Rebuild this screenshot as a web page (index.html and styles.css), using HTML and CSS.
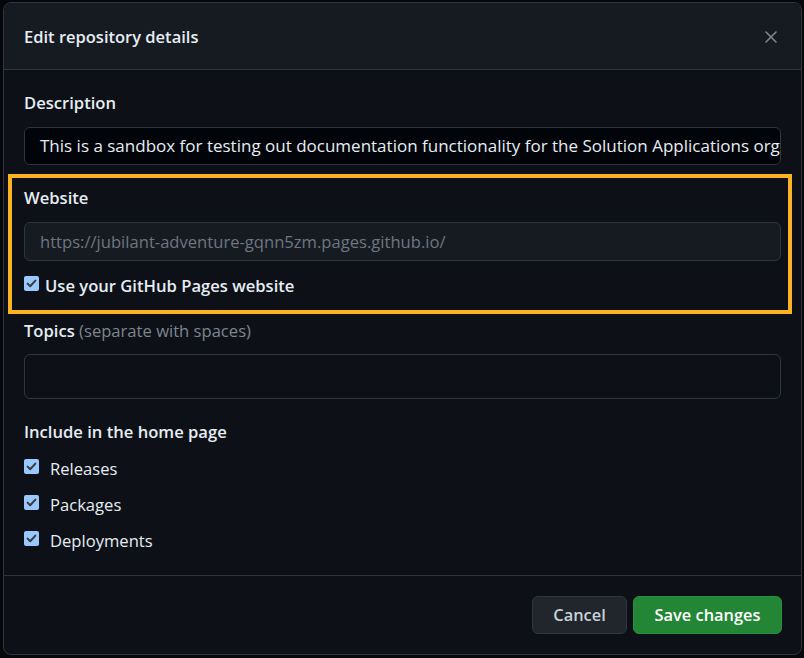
FILE: index.html
```html
<!DOCTYPE html>
<html lang="en">
<head>
<meta charset="utf-8">
<title>Edit repository details</title>
<link rel="stylesheet" href="styles.css">
</head>
<body>
<div class="dialog">
  <header class="dialog-header">
    <h1 class="dialog-title">Edit repository details</h1>
    <button class="close-btn" aria-label="Close">
      <svg width="16" height="16" viewBox="0 0 16 16"><path d="M3 3L13 13M13 3L3 13" stroke="#7d8590" stroke-width="1.6" stroke-linecap="round"/></svg>
    </button>
  </header>
  <div class="dialog-body">
    <div class="field">
      <label class="label">Description</label>
      <div class="input input-desc">This is a sandbox for testing out documentation functionality for the Solution Applications organization</div>
    </div>
    <div class="field highlight">
      <label class="label">Website</label>
      <div class="input input-disabled">https://jubilant-adventure-gqnn5zm.pages.github.io/</div>
      <div class="check-row strong">
        <span class="cbox"><svg width="15" height="15" viewBox="0 0 15 15"><path d="M3.6 7.6L6.2 10.2L11.4 4.6" fill="none" stroke="#3b3b3b" stroke-width="2" stroke-linecap="round" stroke-linejoin="round"/></svg></span>
        <span>Use your GitHub Pages website</span>
      </div>
    </div>
    <div class="field topics">
      <label class="label">Topics <span class="muted">(separate with spaces)</span></label>
      <div class="input input-topics"></div>
    </div>
    <div class="field include">
      <div class="label">Include in the home page</div>
      <div class="check-list">
        <div class="check-row">
          <span class="cbox"><svg width="15" height="15" viewBox="0 0 15 15"><path d="M3.6 7.6L6.2 10.2L11.4 4.6" fill="none" stroke="#3b3b3b" stroke-width="2" stroke-linecap="round" stroke-linejoin="round"/></svg></span>
          <span>Releases</span>
        </div>
        <div class="check-row">
          <span class="cbox"><svg width="15" height="15" viewBox="0 0 15 15"><path d="M3.6 7.6L6.2 10.2L11.4 4.6" fill="none" stroke="#3b3b3b" stroke-width="2" stroke-linecap="round" stroke-linejoin="round"/></svg></span>
          <span>Packages</span>
        </div>
        <div class="check-row">
          <span class="cbox"><svg width="15" height="15" viewBox="0 0 15 15"><path d="M3.6 7.6L6.2 10.2L11.4 4.6" fill="none" stroke="#3b3b3b" stroke-width="2" stroke-linecap="round" stroke-linejoin="round"/></svg></span>
          <span>Deployments</span>
        </div>
      </div>
    </div>
  </div>
  <footer class="dialog-footer">
    <button class="btn btn-cancel">Cancel</button>
    <button class="btn btn-save">Save changes</button>
  </footer>
</div>
</body>
</html>
```
FILE: styles.css
```css
* { box-sizing: border-box; }

html, body {
  margin: 0;
  padding: 0;
}

body {
  background: #05070a;
  font-family: "Open Sans", "Noto Sans", sans-serif;
  font-size: 16.6px;
  color: #e6edf3;
  width: 804px;
  height: 658px;
  overflow: hidden;
  padding: 2px 0 0 3px;
}

.dialog {
  width: 799px;
  height: 653px;
  background: #0d1117;
  border: 1px solid #30363d;
  border-radius: 8px;
  overflow: hidden;
  display: flex;
  flex-direction: column;
}

.dialog-header {
  height: 67px;
  flex-shrink: 0;
  background: #161b22;
  border-bottom: 1px solid #30363d;
  display: flex;
  align-items: center;
  justify-content: space-between;
  padding: 1px 22px 0 20px;
}

.dialog-title {
  margin: 0;
  font-size: 16.5px;
  font-weight: 600;
  line-height: 24px;
  color: #e6edf3;
}

.close-btn {
  background: none;
  border: 0;
  padding: 0;
  width: 16px;
  height: 16px;
  display: flex;
}

.dialog-body {
  padding: 21px 20px 0 20px;
  flex: 1;
}

.label {
  display: block;
  font-weight: 600;
  line-height: 24px;
  color: #e6edf3;
}

.muted {
  font-weight: 400;
  color: #7d8590;
}

.input {
  margin-top: 12px;
  height: 38px;
  border: 1px solid #30363d;
  border-radius: 6px;
  padding: 0 15px;
  display: flex;
  align-items: center;
  white-space: nowrap;
  overflow: hidden;
  line-height: 24px;
}

.input-desc {
  background: #010409;
  color: #e6edf3;
  font-size: 17px;
}

.input-disabled {
  height: 39px;
  background: #161b22;
  color: #6e7681;
}

.highlight {
  margin: 9px -11px 0 -16px;
  border: 4px solid #fbb224;
  padding: 8px 7px 12px 12px;
}

.topics {
  margin-top: 5px;
}

.input-topics {
  margin-top: 11px;
  height: 45px;
  background: #0d1117;
}

.include {
  margin-top: 21px;
}

.check-list {
  margin-top: 13px;
  display: flex;
  flex-direction: column;
  gap: 12px;
}

.check-row {
  display: flex;
  align-items: flex-start;
  gap: 11px;
  line-height: 24px;
  color: #e6edf3;
}

.check-row.strong {
  margin-top: 13px;
  gap: 6px;
  font-weight: 600;
}

.cbox {
  width: 15px;
  height: 15px;
  margin-top: 2px;
  background: #99c8ff;
  border-radius: 2px;
  display: flex;
  flex-shrink: 0;
}

.dialog-footer {
  border-top: 1px solid #30363d;
  padding: 20px 19px 20px 20px;
  display: flex;
  justify-content: flex-end;
  gap: 6px;
}

.btn {
  height: 38px;
  border-radius: 6px;
  font-family: inherit;
  font-size: 16.4px;
  font-weight: 600;
  padding: 0;
  line-height: 24px;
}

.btn-cancel {
  width: 95px;
  background: #21262d;
  border: 1px solid #30363d;
  color: #c9d1d9;
}

.btn-save {
  width: 149px;
  background: #238636;
  border: 1px solid #2a8f3c;
  color: #ffffff;
}
```
